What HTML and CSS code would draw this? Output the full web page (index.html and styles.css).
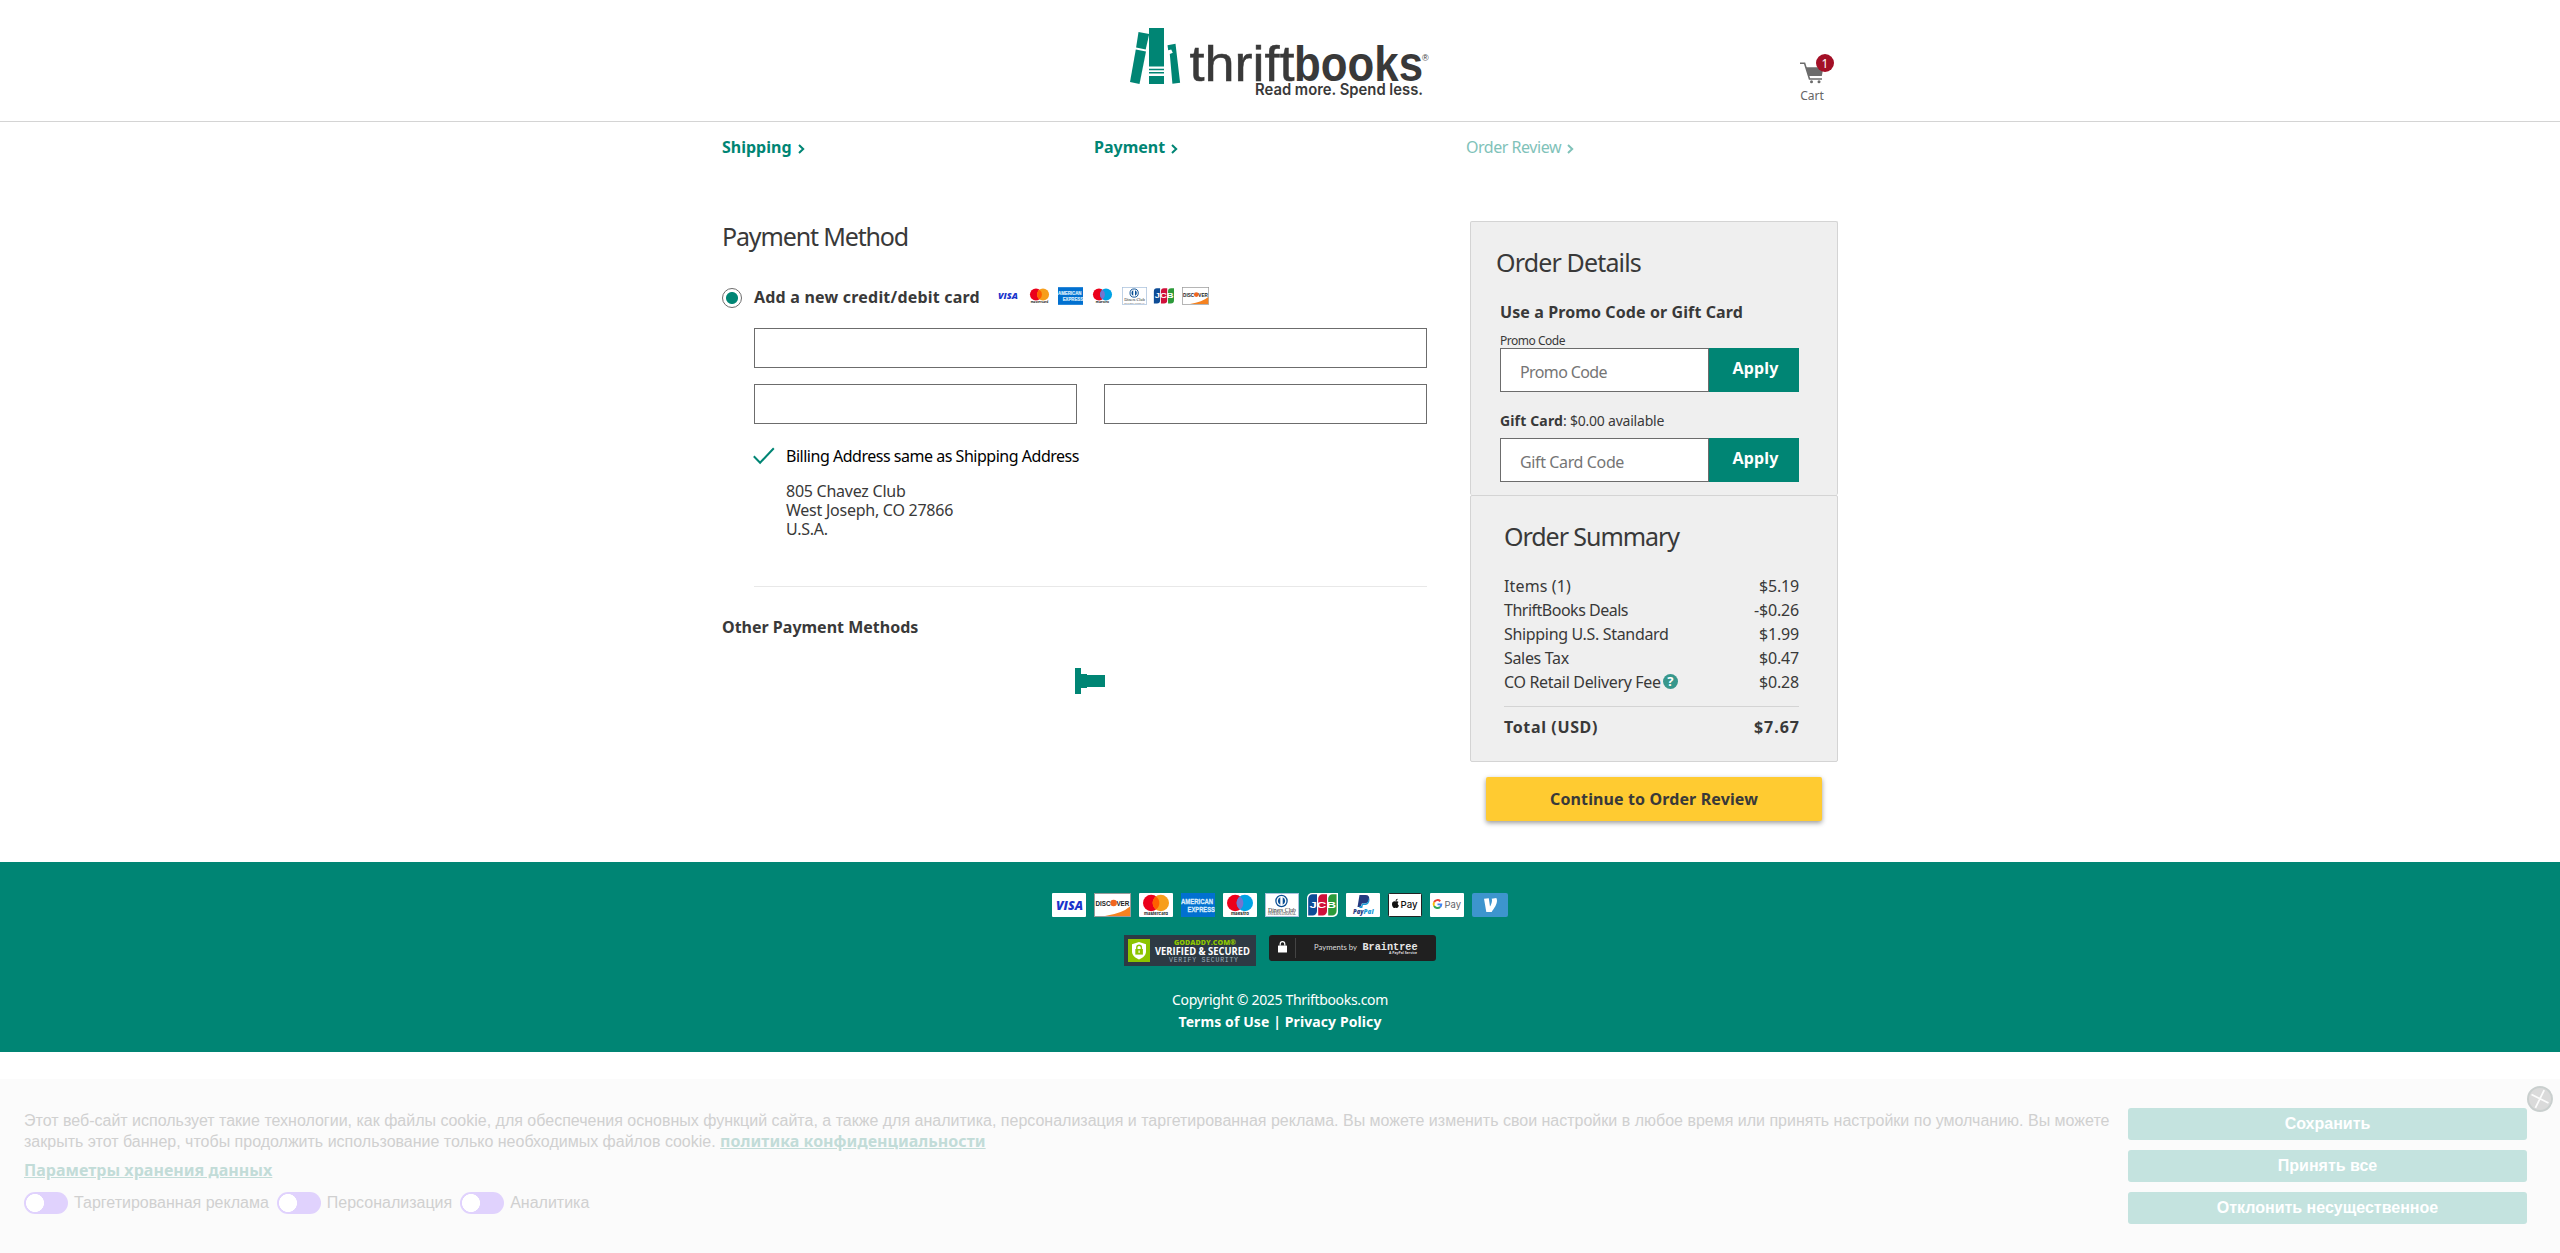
FILE: index.html
```html
<!DOCTYPE html>
<html lang="en">
<head>
<meta charset="utf-8">
<title>Payment - ThriftBooks</title>
<link rel="stylesheet" href="styles.css">
</head>
<body>
<svg class="sprite" width="0" height="0" aria-hidden="true">
  <symbol id="visa" viewBox="0 0 34 24"><rect width="34" height="24" rx="1" fill="#fff"/><text x="4" y="16.6" textLength="27" lengthAdjust="spacingAndGlyphs" font-family="Open Sans, sans-serif" font-size="12.5" font-weight="800" font-style="italic" fill="#1a34cc">VISA</text></symbol>
  <symbol id="mastercard" viewBox="0 0 34 24"><rect width="34" height="24" rx="1" fill="#fff"/><circle cx="12.2" cy="10" r="8.2" fill="#eb001b"/><circle cx="21.8" cy="10" r="8.2" fill="#f79e1b"/><path d="M17 3.4a8.2 8.2 0 0 1 0 13.2a8.2 8.2 0 0 1 0-13.2z" fill="#ff5f00"/><text x="5" y="22" textLength="24" lengthAdjust="spacingAndGlyphs" font-family="Inter, sans-serif" font-size="4" font-weight="700" fill="#222">mastercard</text></symbol>
  <symbol id="maestro" viewBox="0 0 34 24"><rect width="34" height="24" rx="1" fill="#fff"/><circle cx="12.2" cy="10" r="8.2" fill="#eb001b"/><circle cx="21.8" cy="10" r="8.2" fill="#00a2e5"/><path d="M17 3.4a8.2 8.2 0 0 1 0 13.2a8.2 8.2 0 0 1 0-13.2z" fill="#7375cf"/><text x="8" y="22" textLength="18" lengthAdjust="spacingAndGlyphs" font-family="Inter, sans-serif" font-size="4" font-weight="700" fill="#222">maestro</text></symbol>
  <symbol id="amex" viewBox="0 0 34 24"><rect width="34" height="24" fill="#0170d0"/><g font-family="Liberation Sans, sans-serif" font-size="7.6" font-weight="700" fill="#d9ecfb" stroke="#d9ecfb" stroke-width=".3"><text x="0" y="10.8" textLength="32" lengthAdjust="spacingAndGlyphs">AMERICAN</text><text x="6.5" y="18.8" textLength="27.5" lengthAdjust="spacingAndGlyphs">EXPRESS</text></g></symbol>
  <symbol id="diners" viewBox="0 0 34 24"><rect x=".5" y=".5" width="33" height="23" fill="#fff" stroke="#a9c1dc"/><circle cx="16.5" cy="8" r="5.6" fill="#fff" stroke="#0b4f94" stroke-width="1.3"/><path d="M15.3 4.3a4 4 0 0 0 0 7.4zM17.7 4.3a4 4 0 0 1 0 7.4z" fill="#0b4f94"/><text x="3" y="18.6" textLength="28" lengthAdjust="spacingAndGlyphs" font-family="Liberation Serif, serif" font-size="5.6" fill="#222">Diners Club</text><text x="3" y="22.4" textLength="28" lengthAdjust="spacingAndGlyphs" font-family="Liberation Serif, serif" font-size="3.6" fill="#222">INTERNATIONAL</text></symbol>
  <symbol id="jcb" viewBox="0 0 31 24"><path d="M5 0H31V19a5 5 0 0 1-5 5H0V5a5 5 0 0 1 5-5z" fill="#fff"/><path d="M5.5 1.2H10V18a4.5 4.5 0 0 1-4.5 4.5H1.2V5.5a4.3 4.3 0 0 1 4.3-4.3z" fill="#0e4c96"/><path d="M15.5 1.2H20V18a4.5 4.5 0 0 1-4.5 4.5H11.2V5.5a4.3 4.3 0 0 1 4.3-4.3z" fill="#d0103a"/><path d="M25.5 1.2H29.6V18a4.5 4.5 0 0 1-4.5 4.5H21.2V5.5a4.3 4.3 0 0 1 4.3-4.3z" fill="#2c9a3a"/><text x="2.5" y="15.2" textLength="26.5" lengthAdjust="spacingAndGlyphs" font-family="Liberation Sans, sans-serif" font-size="9.5" font-weight="700" fill="#fff">JCB</text></symbol>
  <symbol id="discover" viewBox="0 0 37 24"><rect x=".5" y=".5" width="36" height="23" fill="#fff" stroke="#9b9b9b"/><path d="M36 13.5V23H11Q28 20.5 36 13.5z" fill="#f58220"/><circle cx="19.6" cy="10" r="3.3" fill="#f1661f"/><g font-family="Liberation Sans, sans-serif" font-size="7.6" font-weight="700" fill="#222"><text x="1.5" y="12.7" textLength="15" lengthAdjust="spacingAndGlyphs">DISC</text><text x="22.4" y="12.7" textLength="13" lengthAdjust="spacingAndGlyphs">VER</text></g></symbol>
</svg>

<header class="header">
  <div class="header-inner">
    <svg class="logo" width="302" height="82" viewBox="0 0 302 82" role="img" aria-label="ThriftBooks">
      <g fill="#008574"><path d="M8.5 4l10.700 2-3.500 15.400-9.600-2z"/><path d="M5.800 21.400l10.200 2.100L9.500 56 0 54z"/><path d="M19 0h15v38.500H19zM19 40.700h15v1.600H19zM19 44h15v1.600H19zM19 48h15v8H19z"/><path d="M37.500 17.200l8-1.400 4.600 39-7.700 1L39.800 26l3-1.200-1.600-3.200-3 .6z"/></g>
      <g fill="#393939" font-family="Liberation Sans, sans-serif" font-size="50"><text x="59.500" y="53" stroke="#393939" stroke-width=".5" textLength="105" lengthAdjust="spacingAndGlyphs">thrift</text><text x="164" y="53" font-weight="700" textLength="129" lengthAdjust="spacingAndGlyphs">books</text><text x="292" y="33" font-size="9">®</text></g>
      <text x="125" y="67.300" textLength="168" lengthAdjust="spacingAndGlyphs" font-family="Inter, sans-serif" font-size="15.500" font-weight="600" fill="#393939">Read more. Spend less.</text>
    </svg>
    <a class="cart">
      <svg width="24" height="22" viewBox="0 0 24 22"><path d="M0 1.200h4.600L9.500 17H22" fill="none" stroke="#6c6c6c" stroke-width="1.600"/><path d="M5.800 5.200H23.500L21.800 14H8.500z" fill="#6c6c6c"/><circle cx="11.500" cy="19.800" r="1.500" fill="#6c6c6c"/><circle cx="19" cy="19.800" r="1.500" fill="#6c6c6c"/></svg>
      <span class="cart-count">1</span>
      <span class="cart-label">Cart</span>
    </a>
  </div>
</header>

<div class="page">
  <nav class="steps">
    <a class="step">Shipping<svg width="7" height="10" viewBox="0 0 7 10"><path d="M1 1l4.200 4L1 9" /></svg></a>
    <a class="step">Payment<svg width="7" height="10" viewBox="0 0 7 10"><path d="M1 1l4.200 4L1 9" /></svg></a>
    <a class="step step-next">Order Review<svg width="7" height="10" viewBox="0 0 7 10"><path d="M1 1l4.200 4L1 9" /></svg></a>
  </nav>

  <div class="columns">
    <main class="payment">
      <h1 class="title title-page">Payment Method</h1>
      <div class="card-option">
        <span class="radio"></span>
        <label class="card-label bold">Add a new credit/debit card</label>
        <span class="accepted">
          <svg width="25" height="18"><use href="#visa"/></svg>
          <svg width="25" height="18"><use href="#mastercard"/></svg>
          <svg width="25" height="18"><use href="#amex"/></svg>
          <svg width="25" height="18"><use href="#maestro"/></svg>
          <svg width="25" height="18"><use href="#diners"/></svg>
          <svg width="22" height="18"><use href="#jcb"/></svg>
          <svg width="27" height="18"><use href="#discover"/></svg>
        </span>
      </div>
      <div class="card-form">
        <div class="field"></div>
        <div class="field-row"><div class="field"></div><div class="field"></div></div>
        <div class="same-address">
          <svg width="22" height="18" viewBox="0 0 22 18"><path d="M.8 9.200l6.300 6.500L20.800 1.200" fill="none" stroke="#008574" stroke-width="2"/></svg>
          <span>Billing Address same as Shipping Address</span>
        </div>
        <address class="address">805 Chavez Club<br>West Joseph, CO 27866<br>U.S.A.</address>
      </div>
      <h2 class="other bold">Other Payment Methods</h2>
      <div class="loader"><i></i><i></i><i></i></div>
    </main>

    <aside class="side">
      <section class="details">
        <h2 class="title title-details">Order Details</h2>
        <div class="codes">
          <h3 class="codes-title bold">Use a Promo Code or Gift Card</h3>
          <div class="tiny-label">Promo Code</div>
          <div class="code-row"><div class="code-input promo">Promo Code</div><button class="apply">Apply</button></div>
          <div class="gift-label"><b>Gift Card</b>: $0.00 available</div>
          <div class="code-row"><div class="code-input">Gift Card Code</div><button class="apply">Apply</button></div>
        </div>
      </section>
      <section class="summary">
        <h2 class="title">Order Summary</h2>
        <dl class="lines">
          <div><dt class="items">Items (1)</dt><dd>$5.19</dd></div>
          <div><dt class="deals">ThriftBooks Deals</dt><dd>-$0.26</dd></div>
          <div><dt>Shipping U.S. Standard</dt><dd>$1.99</dd></div>
          <div><dt>Sales Tax</dt><dd>$0.47</dd></div>
          <div><dt>CO Retail Delivery Fee<span class="help">?</span></dt><dd>$0.28</dd></div>
        </dl>
        <div class="total bold"><span>Total (USD)</span><span class="total-sum">$7.67</span></div>
      </section>
      <button class="continue bold">Continue to Order Review</button>
    </aside>
  </div>
</div>

<footer class="footer">
  <div class="footer-cards">
    <svg width="34" height="24"><use href="#visa"/></svg>
    <svg width="37" height="24"><use href="#discover"/></svg>
    <svg width="34" height="24"><use href="#mastercard"/></svg>
    <svg width="34" height="24"><use href="#amex"/></svg>
    <svg width="34" height="24"><use href="#maestro"/></svg>
    <svg width="34" height="24"><use href="#diners"/></svg>
    <svg width="31" height="24"><use href="#jcb"/></svg>
    <svg width="34" height="24" viewBox="0 0 34 24"><rect width="34" height="24" rx="1" fill="#fff"/><path d="M13.500 2h6c3 0 4.200 1.800 3.600 4.500-.7 3-2.700 4-5.300 4h-2L15 14h-3.500z" fill="#253b80"/><path d="M22.800 5c.8 1 .9 2.200.4 3.700-.9 2.800-3 3.400-5 3.400h-1.300L16.300 15h-3l.5-2h1.600l1-2.500h2c2.500 0 4.200-1.800 4.400-5.500z" fill="#179bd7"/><g font-family="Open Sans, sans-serif" font-size="6" font-weight="800" font-style="italic"><text x="7" y="21" textLength="10.500" lengthAdjust="spacingAndGlyphs" fill="#253b80">Pay</text><text x="17.500" y="21" textLength="10" lengthAdjust="spacingAndGlyphs" fill="#179bd7">Pal</text></g></svg>
    <svg width="34" height="24" viewBox="0 0 34 24"><rect x=".5" y=".5" width="33" height="23" rx="1" fill="#fff" stroke="#222"/><path d="M7.800 8.600c1-.6 2.200-.3 2.800.4-1.300.9-1.100 2.800.3 3.500-.5 1.500-1.400 3-2.500 2.500-.6-.3-1-.3-1.600 0C5.300 15.600 4 13 4 11.200c0-2.400 1.900-3.300 3.800-2.600zM7.600 8c-.1-1.200.9-2.200 2-2.300C9.700 6.900 8.800 8 7.600 8z" fill="#111"/><text x="12.500" y="15" textLength="17" lengthAdjust="spacingAndGlyphs" font-family="Inter, sans-serif" font-size="9.500" font-weight="500" fill="#111">Pay</text></svg>
    <svg width="34" height="24" viewBox="0 0 34 24"><rect width="34" height="24" rx="1" fill="#fff"/><g fill="none" stroke-width="1.900"><path d="M10.300 8.200A3.900 3.900 0 0 0 4.100 9.200" stroke="#ea4335"/><path d="M4.100 9.200a3.900 3.900 0 0 0 0 3.800" stroke="#fbbc04"/><path d="M4.100 13a3.900 3.900 0 0 0 6.100 1" stroke="#34a853"/><path d="M10.200 14a3.900 3.900 0 0 0 1.100-2.600H7.500" stroke="#4285f4"/></g><text x="14.500" y="14.800" textLength="16.500" lengthAdjust="spacingAndGlyphs" font-family="Inter, sans-serif" font-size="9.500" fill="#5f6368">Pay</text></svg>
    <svg width="36" height="24" viewBox="0 0 36 24"><rect width="36" height="24" rx="2" fill="#3d95ce"/><path d="M24.300 5c.5.800.7 1.700.7 2.800 0 3.400-2.900 7.900-5.300 11.100h-5.400L12 5.800l4.800-.5 1.200 8.300c1.100-1.800 2-4.400 2-6.200 0-.7-.1-1.300-.4-1.700z" fill="#fff"/></svg>
  </div>
  <div class="footer-badges">
    <svg width="132" height="31" viewBox="0 0 132 31"><rect width="132" height="31" fill="#2d3a44"/><rect x="4" y="4" width="22" height="23" fill="#8cc400"/><path d="M15 7l7 2.200v7c0 4-3 6.500-7 8.300-4-1.800-7-4.300-7-8.300v-7z" fill="#fff"/><path d="M12.800 14v-1.500a2.300 2.300 0 0 1 4.600 0V14" fill="none" stroke="#8cc400" stroke-width="1.400"/><rect x="11.300" y="14" width="7.600" height="5.600" fill="#8cc400"/><rect x="14.500" y="15.500" width="1.200" height="2.400" fill="#fff"/><text x="50" y="10" textLength="62" lengthAdjust="spacingAndGlyphs" font-family="Open Sans, sans-serif" font-size="6.500" font-weight="800" fill="#8cc400">GODADDY.COM®</text><text x="31" y="20" textLength="95" lengthAdjust="spacingAndGlyphs" font-family="Open Sans, sans-serif" font-size="11" font-weight="700" fill="#fff">VERIFIED &amp; SECURED</text><text x="45" y="27" textLength="69" font-family="Liberation Mono, monospace" font-size="6.500" fill="#9fb0bb">VERIFY SECURITY</text></svg>
    <svg width="167" height="26" viewBox="0 0 167 26"><rect width="167" height="26" rx="3" fill="#202020"/><rect x="9" y="10.500" width="9" height="7" rx=".6" fill="#fff"/><path d="M11.200 10.500V9a2.300 2.300 0 0 1 4.600 0v1.500" fill="none" stroke="#fff" stroke-width="1.200"/><path d="M26.500 3v20" stroke="#444"/><text x="45" y="14.500" textLength="43" lengthAdjust="spacingAndGlyphs" font-family="Lato, sans-serif" font-size="7.500" fill="#ddd">Payments by</text><text x="93.500" y="14.500" textLength="55" lengthAdjust="spacingAndGlyphs" font-family="Liberation Mono, monospace" font-size="10" font-weight="700" fill="#e8e8e8">Braintree</text><text x="120" y="19.300" textLength="28" lengthAdjust="spacingAndGlyphs" font-family="Open Sans, sans-serif" font-size="4" font-weight="700" fill="#ddd">A PayPal Service</text></svg>
  </div>
  <p class="footer-text copyright">Copyright © 2025 Thriftbooks.com</p>
  <p class="footer-text bold">Terms of Use | Privacy Policy</p>
</footer>

<section class="cookies" lang="ru">
  <div class="cookies-body">
    <p class="cookies-copy">Этот веб-сайт использует такие технологии, как файлы cookie, для обеспечения основных функций сайта, а также для аналитика, персонализация и таргетированная реклама. Вы можете изменить свои настройки в любое время или принять настройки по умолчанию. Вы можете<br>закрыть этот баннер, чтобы продолжить использование только необходимых файлов cookie. <a class="cookies-link">политика конфиденциальности</a></p>
    <p class="cookies-settings"><a class="cookies-link">Параметры хранения данных</a></p>
    <div class="toggles">
      <span class="toggle"></span><span class="toggle-label">Таргетированная реклама</span>
      <span class="toggle"></span><span class="toggle-label">Персонализация</span>
      <span class="toggle"></span><span class="toggle-label">Аналитика</span>
    </div>
  </div>
  <div class="cookies-actions">
    <button>Сохранить</button>
    <button>Принять все</button>
    <button>Отклонить несущественное</button>
  </div>
  <svg class="cookies-close" width="28" height="28" viewBox="0 0 28 28"><circle cx="14" cy="14" r="12" fill="#dadada" stroke="#c9cfce" stroke-width="2"/><path d="M5.500 9.500l17 8.500M18.200 5.200l-8.800 17.600" stroke="#fbfbfb" stroke-width="1.800"/></svg>
</section>
</body>
</html>
```
FILE: styles.css
```css
* { box-sizing: border-box; }
body { margin: 0; background: #fff; color: #393939; font: 16px/24px "Noto Sans", sans-serif; }
h1, h2, h3, p, dl, dd { margin: 0; }
button { border: 0; padding: 0; font: inherit; color: inherit; }
svg { display: block; flex: none; }
.sprite { display: none; }
.bold { font-weight: 700; }

.header { height: 122px; border-bottom: 1px solid #d4d4d4; }
.header-inner { width: 1116px; margin: 0 auto; display: flex; justify-content: space-between; padding: 28px 4px 0 408px; }
.cart { position: relative; display: flex; flex-direction: column; align-items: center; width: 44px; padding-top: 34px; color: #666; }
.cart-count { position: absolute; left: 26px; top: 26px; width: 18px; height: 18px; border-radius: 50%; background: #a30f26; color: #fff; font-size: 12px; line-height: 19px; text-align: center; }
.cart-label { margin-top: 2px; font-size: 12px; line-height: 20px; }

.page { width: 1116px; height: 740px; margin: 0 auto; padding-top: 13px; }
.steps { display: grid; grid-template-columns: repeat(3, 372px); color: #008574; font-weight: 700; }
.step { display: flex; align-items: center; gap: 6px; }
.step svg { margin-top: 3px; fill: none; stroke: currentColor; stroke-width: 2; }
.step-next { color: #80c2b9; font-weight: 400; letter-spacing: -.467px; }

.columns { display: grid; grid-template-columns: 705px 368px; gap: 43px; padding-top: 59px; }
.title { font-size: 25px; line-height: 36px; font-weight: 400; letter-spacing: -1.05px; }
.title-page { letter-spacing: -1.15px; }
.title-details { letter-spacing: -.85px; }

.card-option { display: flex; align-items: center; height: 24px; margin-top: 31px; }
.radio { width: 20px; height: 20px; margin: 2px 12px 0 0; border: 1px solid #6c6c6c; border-radius: 50%; background: radial-gradient(circle, #008574 5.500px, #fff 6.500px); }
.card-label { width: 241px; letter-spacing: .21px; }
.accepted { display: flex; gap: 6.670px; margin-top: -2px; }
.card-form { margin: 19px 0 0 32px; padding-bottom: 47px; border-bottom: 1px solid #e8e8e8; }
.field { height: 40px; border: 1px solid #6c6c6c; }
.field-row { display: grid; grid-template-columns: 1fr 1fr; gap: 27px; margin-top: 16px; }
.same-address { display: flex; align-items: center; gap: 11px; height: 24px; margin: 20px 0 14px -1px; color: #000; letter-spacing: -.479px; }
.address { padding-left: 32px; font-style: normal; line-height: 19px; letter-spacing: -.25px; }
.other { font-size: 16px; margin-top: 28px; }
.loader { display: flex; align-items: center; height: 26px; margin: 29px 0 0 353px; }
.loader i { width: 6px; height: 26px; background: #008574; }
.loader i:nth-child(2) { height: 14px; }
.loader i:nth-child(3) { width: 18px; height: 12px; }

.side { padding-top: 3px; }
.details, .summary { background: #efefef; border: 1px solid #d4d4d4; border-radius: 2px; }
.details { height: 274px; border-bottom: 0; padding: 22px 38px 0 25px; }
.codes { padding-left: 4px; }
.codes-title { font-size: 16px; margin-top: 20px; letter-spacing: .1px; }
.tiny-label { margin-top: 9px; margin-bottom: -1px; font-size: 12px; line-height: 16px; letter-spacing: -.48px; }
.code-row { display: flex; height: 44px; }
.code-input { width: 209px; padding: 3px 0 0 19px; border: 1px solid #6c6c6c; background: #fff; color: #757575; line-height: 40px; letter-spacing: -.375px; }
.promo { letter-spacing: -.61px; }
.apply { flex: 1; padding-bottom: 4px; padding-left: 3px; background: #008574; color: #fff; font-weight: 700; letter-spacing: .16px; }
.gift-label { margin: 19px 0 7px; font-size: 14px; line-height: 20px; letter-spacing: -.22px; }
.gift-label b { letter-spacing: .15px; }
.summary { height: 267px; padding: 22px 38px 0 33px; }
.lines { margin-top: 20px; padding-bottom: 12px; border-bottom: 1px solid #d4d4d4; }
.lines div, .total { display: flex; justify-content: space-between; }
.lines dt { display: flex; align-items: center; letter-spacing: -.33px; }
.lines dd { letter-spacing: -.18px; }
.lines .items { letter-spacing: .14px; }
.lines .deals { letter-spacing: -.494px; }
.help { width: 15px; height: 15px; margin: -1px 0 0 2px; border-radius: 50%; background: #37978c; color: #fff; font: 700 13px/15px "Noto Sans", sans-serif; text-align: center; }
.total { margin-top: 8px; letter-spacing: .63px; }
.total-sum { margin-right: -1px; letter-spacing: .98px; }
.continue { display: block; width: 336px; height: 44px; margin: 15px 16px 0; border-radius: 2px; background: #ffcb31; box-shadow: 0 2px 5px rgba(0, 0, 0, .4); letter-spacing: .12px; }

.footer { height: 190px; padding-top: 31px; background: #008574; color: #fff; }
.footer-cards { display: flex; justify-content: center; gap: 8px; }
.footer-badges { display: flex; justify-content: center; gap: 13px; height: 31px; margin: 18px 0 23px; }
.footer-text { font-size: 14px; line-height: 22px; text-align: center; letter-spacing: .1px; }
.copyright { letter-spacing: -.33px; }

.cookies { position: fixed; left: 0; right: 0; bottom: 0; height: 174px; display: flex; justify-content: space-between; padding: 29px 33px 0 24px; background: #fbfbfb; color: #d0d0d0; font-family: "Liberation Sans", sans-serif; }
.cookies-copy { padding-top: 2px; line-height: 21px; white-space: nowrap; }
.cookies-link { color: #c2dcd8; font-family: "Noto Sans", sans-serif; font-weight: 700; text-decoration: underline; letter-spacing: .03px; }
.cookies-settings { margin-top: 8px; line-height: 21px; }
.toggles { display: flex; align-items: center; height: 22px; margin-top: 11px; }
.toggle { width: 44px; height: 22px; margin-right: 6px; border-radius: 11px; background: radial-gradient(circle at 11px 11px, #fff 8.700px, #e0d2fd 9.300px); }
.toggle-label { line-height: 22px; margin-right: 8px; }
.cookies-actions { display: grid; grid-template-columns: 399px; grid-auto-rows: 32px; gap: 10px; }
.cookies-actions button { border-radius: 3px; background: #c4e3df; color: #fff; font-weight: 700; }
.cookies-close { position: absolute; right: 6px; top: 6px; }
```
